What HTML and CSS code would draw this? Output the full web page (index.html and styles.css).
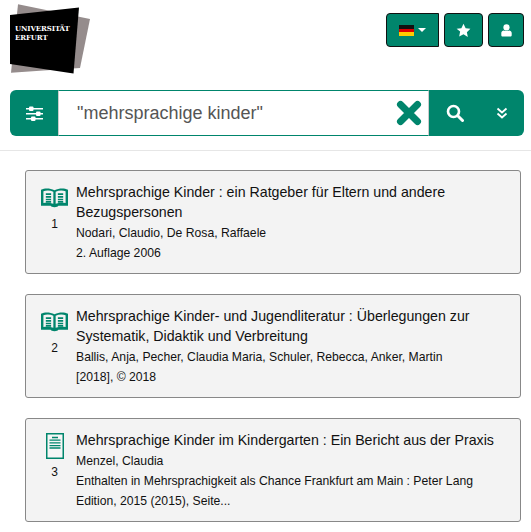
FILE: index.html
```html
<!DOCTYPE html>
<html lang="de">
<head>
  <meta charset="UTF-8" />
  <title>Suche</title>
  <link rel="stylesheet" href="styles.css">
</head>
<body>
  <header class="top-bar">
    <div class="logo">
      <svg class="logo-shape" width="82" height="72" viewBox="0 0 82 72">
        <polygon points="8,0.300 80,15 70,64 1,68.700" fill="#958c8c"/>
        <polygon points="0,11 69,3.500 63.500,69.500 0,60" fill="#000"/>
      </svg>
      <div class="logo-text">UNIVERSITÄT<br>ERFURT</div>
    </div>
    <nav class="top-buttons">
      <button class="top-btn lang-btn">
        <span class="flag"></span><span class="caret"></span>
      </button>
      <button class="top-btn star-btn">
        <svg width="15" height="15" viewBox="0 0 24 24"><path fill="#fff" d="M12 1l3.400 7.200 7.600 1-5.600 5.400 1.500 7.900L12 18l-6.900 3.500 1.500-7.900L1 9.200l7.600-1z"/></svg>
      </button>
      <button class="top-btn user-btn">
        <svg width="11" height="13" viewBox="0 0 12 15"><circle cx="6" cy="4" r="3.600" fill="#fff"/><path fill="#fff" d="M0 13v-2.500C0 8.500 1.500 7.500 3 7.500c1 .8 5 .8 6 0 1.500 0 3 1 3 3V13c0 1-.7 1.500-1.500 1.500h-9C.7 14.500 0 14 0 13z"/></svg>
      </button>
    </nav>
  </header>

  <div class="search-wrap">
    <form class="search-bar">
      <button type="button" class="search-side left-side">
        <svg width="17" height="15" viewBox="0 0 17 15" fill="#fff">
          <rect x="0" y="2" width="17" height="1.500"/><rect x="3" y="0.500" width="4.500" height="4.500" rx="1"/>
          <rect x="0" y="7" width="17" height="1.500"/><rect x="10" y="5.500" width="4.500" height="4.500" rx="1"/>
          <rect x="0" y="12" width="17" height="1.500"/><rect x="5" y="10.500" width="4.500" height="4.500" rx="1"/>
        </svg>
      </button>
      <div class="search-input">
        <span class="query">"mehrsprachige kinder"</span>
        <svg class="clear" width="26" height="26" viewBox="0 0 26 26"><path d="M4.500 4.500 L21.500 21.500 M21.500 4.500 L4.500 21.500" stroke="#00856c" stroke-width="7" stroke-linecap="round"/></svg>
      </div>
      <div class="search-side right-side">
        <svg width="18" height="18" viewBox="0 0 18 18" fill="none" stroke="#fff"><circle cx="7.500" cy="7.500" r="5.500" stroke-width="2.600"/><path d="M12 12l4.500 4.500" stroke-width="3" stroke-linecap="round"/></svg>
        <svg width="12" height="12" viewBox="0 0 12 12" fill="none" stroke="#fff" stroke-width="1.800"><path d="M1.500 1.500L6 5.500l4.500-4M1.500 6.500L6 10.500l4.500-4"/></svg>
      </div>
    </form>
  </div>

  <main class="results">
    <article class="result">
      <div class="result-type">
        <div class="type-icon">
          <svg width="27" height="20" viewBox="0 0 28 20"><path fill="#00856c" d="M0 1.500c4-2 9-2 14 .5 5-2.500 10-2.500 14-.5V18h-10c-1 1-1.500 1.500-4 1.500s-3-.5-4-1.500H0z"/><path fill="#f3f3f3" d="M2.500 3c3-1 7-1 10.300.5V16c-3-1-7-1.200-10.300-.7zM25.500 3c-3-1-7-1-10.300.5V16c3-1 7-1.200 10.300-.7z"/><path stroke="#00856c" stroke-width="1.700" d="M5 6h5.500M5 8.800h5.500M5 11.600h5.500M5 14h5.500M17.500 6H23M17.500 8.800H23M17.500 11.600H23M17.500 14H23"/></svg>
        </div>
        <span class="result-no">1</span>
      </div>
      <div class="result-body">
        <h2 class="result-title">Mehrsprachige Kinder : ein Ratgeber für Eltern und andere Bezugspersonen</h2>
        <p class="result-line">Nodari, Claudio, De Rosa, Raffaele</p>
        <p class="result-line">2. Auflage 2006</p>
      </div>
    </article>

    <article class="result">
      <div class="result-type">
        <div class="type-icon">
          <svg width="27" height="20" viewBox="0 0 28 20"><path fill="#00856c" d="M0 1.500c4-2 9-2 14 .5 5-2.500 10-2.500 14-.5V18h-10c-1 1-1.500 1.500-4 1.500s-3-.5-4-1.500H0z"/><path fill="#f3f3f3" d="M2.500 3c3-1 7-1 10.300.5V16c-3-1-7-1.200-10.300-.7zM25.500 3c-3-1-7-1-10.300.5V16c3-1 7-1.200 10.300-.7z"/><path stroke="#00856c" stroke-width="1.700" d="M5 6h5.500M5 8.800h5.500M5 11.600h5.500M5 14h5.500M17.500 6H23M17.500 8.800H23M17.500 11.600H23M17.500 14H23"/></svg>
        </div>
        <span class="result-no">2</span>
      </div>
      <div class="result-body">
        <h2 class="result-title">Mehrsprachige Kinder- und Jugendliteratur : Überlegungen zur Systematik, Didaktik und Verbreitung</h2>
        <p class="result-line">Ballis, Anja, Pecher, Claudia Maria, Schuler, Rebecca, Anker, Martin</p>
        <p class="result-line">[2018], © 2018</p>
      </div>
    </article>

    <article class="result">
      <div class="result-type">
        <div class="type-icon">
          <svg width="18" height="26" viewBox="0 0 18 26"><rect x="0.750" y="0.750" width="16.500" height="24.500" fill="#f6f6f6" stroke="#00856c" stroke-width="1.500"/><path stroke="#00856c" stroke-width="1.300" d="M6 4.500h6M3.500 7.200h11M3.500 9.900h11M3.500 12.600h11M3.500 15h11"/></svg>
        </div>
        <span class="result-no">3</span>
      </div>
      <div class="result-body">
        <h2 class="result-title">Mehrsprachige Kinder im Kindergarten : Ein Bericht aus der Praxis</h2>
        <p class="result-line">Menzel, Claudia</p>
        <p class="result-line">Enthalten in Mehrsprachigkeit als Chance Frankfurt am Main : Peter Lang Edition, 2015 (2015), Seite...</p>
      </div>
    </article>
  </main>
</body>
</html>
```

FILE: styles.css
```css
* {
  margin: 0;
  padding: 0;
  box-sizing: border-box;
}

body {
  font-family: 'Liberation Sans', Arial, sans-serif;
  background-color: #fff;
  color: #111;
  overflow: hidden;
}

.top-bar {
  display: flex;
  justify-content: space-between;
  padding: 4px 7px 0 10px;
  height: 90px;
}

.logo {
  position: relative;
  width: 82px;
  height: 72px;
}

.logo-text {
  position: absolute;
  top: 20px;
  left: 5px;
  color: #fff;
  font-family: 'DejaVu Serif', serif;
  font-size: 7px;
  font-weight: 700;
  line-height: 9px;
  letter-spacing: -0.1px;
}

.top-buttons {
  display: flex;
  gap: 5px;
  margin-top: 9px;
}

.top-btn {
  display: flex;
  align-items: center;
  justify-content: center;
  height: 34px;
  background-color: #00856c;
  border: 1px solid #111;
  border-radius: 4px;
}

.lang-btn {
  width: 53px;
  gap: 4px;
  border-radius: 4px 0 0 4px;
}

.star-btn {
  width: 39px;
}

.user-btn {
  width: 36px;
}

.flag {
  width: 15px;
  height: 11px;
  background: linear-gradient(#111 33%, #d00 33%, #d00 66%, #fc0 66%);
}

.caret {
  border-left: 4px solid transparent;
  border-right: 4px solid transparent;
  border-top: 4px solid #fff;
}

.search-wrap {
  padding-bottom: 14px;
  border-bottom: 1px solid #e6e6e6;
}

.search-bar {
  display: flex;
  height: 46px;
  margin: 0 7px 0 10px;
}

.search-side {
  display: flex;
  align-items: center;
  background-color: #00856c;
  border: none;
}

.left-side {
  justify-content: center;
  width: 48px;
  border-radius: 6px 0 0 6px;
}

.right-side {
  justify-content: space-between;
  width: 95px;
  padding: 0 16px 0 17px;
  border-radius: 0 6px 6px 0;
}

.search-input {
  flex: 1;
  display: flex;
  align-items: center;
  justify-content: space-between;
  padding: 0 6px 0 18px;
  border-top: 1px solid #00856c;
  border-bottom: 1px solid #00856c;
  border-left: 1px solid #ccc;
  border-right: 1px solid #ccc;
}

.query {
  font-size: 18px;
  color: #555;
}

.results {
  display: flex;
  flex-direction: column;
  gap: 20px;
  padding: 19px 10px 0 25px;
}

.result {
  display: flex;
  min-height: 104px;
  padding: 11px 10px 8px 0;
  background-color: #f3f3f3;
  border: 1px solid #888;
  border-radius: 3px;
}

.result-type {
  display: flex;
  flex-direction: column;
  align-items: center;
  gap: 6px;
  flex: 0 0 50px;
  padding: 3px 0 0 7px;
}

.type-icon {
  display: flex;
  align-items: center;
  height: 26px;
}

.result-no {
  font-size: 12px;
  line-height: 14px;
}

.result-title {
  font-size: 14.2px;
  font-weight: 400;
  line-height: 20px;
  margin-bottom: 1px;
  color: #111;
}

.result-line {
  font-size: 12.2px;
  line-height: 20px;
}
```
